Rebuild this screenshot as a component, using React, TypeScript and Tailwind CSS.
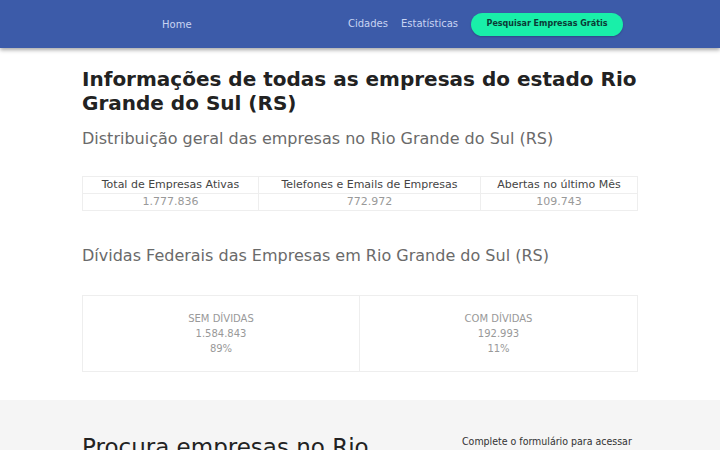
export default function App() {
  const font = { fontFamily: '"DejaVu Sans", sans-serif' };
  return (
    <div className="min-h-[450px] bg-white text-[#333]" style={font}>
      <header className="h-[48px] bg-[#3c5ba9] shadow-[0_2px_4px_rgba(0,0,0,0.35)] relative z-10">
        <div className="flex items-center h-full pl-[162px] pr-[97px]">
          <a className="text-[10px] text-[#c9d4f2] mt-[1px]">Home</a>
          <div className="flex-1" />
          <a className="text-[10px] text-[#c9d4f2] mr-[13px] -mt-[2px]">Cidades</a>
          <a className="text-[10px] text-[#c9d4f2] mr-[13px] -mt-[2px]">Estatísticas</a>
          <button className="h-[23px] w-[152px] rounded-full bg-[#19efa9] text-[#0b3a36] text-[8px] font-bold shadow-[0_1px_2px_rgba(0,0,0,0.2)]">
            Pesquisar Empresas Grátis
          </button>
        </div>
      </header>
      <main className="w-[556px] mx-auto pt-[19px]">
        <h1 className="text-[20px] leading-[24px] font-bold text-[#222]">
          Informações de todas as empresas do estado Rio Grande do Sul (RS)
        </h1>
        <h2 className="mt-[13px] text-[16px] leading-[22px] text-[#6a6a6a]">
          Distribuição geral das empresas no Rio Grande do Sul (RS)
        </h2>
        <table className="mt-[26px] w-full border-collapse text-[11px] leading-[16px]">
          <thead>
            <tr>
              <th className="w-[176px] h-[16px] p-0 border border-[#eee] font-normal text-[#444]">Total de Empresas Ativas</th>
              <th className="w-[222px] h-[16px] p-0 border border-[#eee] font-normal text-[#444]">Telefones e Emails de Empresas</th>
              <th className="h-[16px] p-0 border border-[#eee] font-normal text-[#444]">Abertas no último Mês</th>
            </tr>
          </thead>
          <tbody>
            <tr>
              <td className="h-[16px] p-0 border border-[#eee] text-center text-[#999]">1.777.836</td>
              <td className="h-[16px] p-0 border border-[#eee] text-center text-[#999]">772.972</td>
              <td className="h-[16px] p-0 border border-[#eee] text-center text-[#999]">109.743</td>
            </tr>
          </tbody>
        </table>
        <h2 className="mt-[34px] text-[16px] leading-[22px] text-[#6a6a6a]">
          Dívidas Federais das Empresas em Rio Grande do Sul (RS)
        </h2>
        <div className="mt-[28px] grid grid-cols-2 border border-[#eee] h-[77px] text-[10px] text-[#999] leading-[15px]">
          <div className="flex flex-col items-center justify-center border-r border-[#eee]">
            <span>SEM DÍVIDAS</span>
            <span>1.584.843</span>
            <span>89%</span>
          </div>
          <div className="flex flex-col items-center justify-center">
            <span>COM DÍVIDAS</span>
            <span>192.993</span>
            <span>11%</span>
          </div>
        </div>
      </main>
      <section className="mt-[28px] bg-[#f5f5f5] h-[50px] overflow-hidden">
        <div className="w-[556px] mx-auto flex pt-[33px]">
          <div className="w-[380px] text-[23px] leading-[28px] text-[#222]">Procura empresas no Rio</div>
          <div className="text-[10.5px] text-[#333] pt-[1px]" style={{ fontStretch: "condensed" }}>
            Complete o formulário para acessar
          </div>
        </div>
      </section>
    </div>
  );
}
